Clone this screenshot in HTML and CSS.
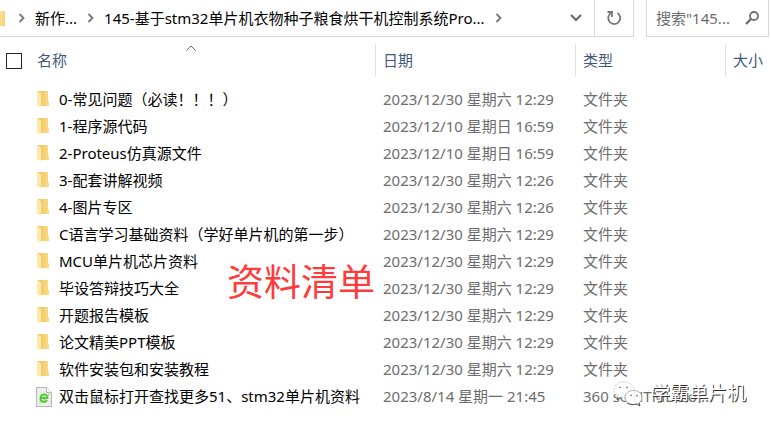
FILE: index.html
```html
<!DOCTYPE html>
<html lang="zh-CN">
<head>
<meta charset="utf-8">
<title>资料清单</title>
<link rel="stylesheet" href="styles.css">
</head>
<body>
<svg class="symbols" aria-hidden="true">
  <linearGradient id="back"><stop offset="0" stop-color="#efc55f"/><stop offset="1" stop-color="#fadb85"/></linearGradient>
  <symbol id="chevron" viewBox="0 0 8 10"><path d="M1.500 1l4 4-4 4" fill="none" stroke="#777" stroke-width="1.8"/></symbol>
  <symbol id="folder" viewBox="0 0 12 17">
    <path d="M1 0h10v10.500h1V15H3z" fill="url(#back)"/>
    <path d="M0 0l4 2.500V16.500L0 14.500z" fill="#ffe8a8"/>
  </symbol>
</svg>

<header class="toolbar">
  <div class="address">
    <span class="root"></span>
    <svg class="chevron"><use href="#chevron"/></svg>
    <a class="crumb" href="#">新作...</a>
    <svg class="chevron"><use href="#chevron"/></svg>
    <a class="crumb" href="#">145-基于stm32单片机衣物种子粮食烘干机控制系统Pro...</a>
    <svg class="chevron"><use href="#chevron"/></svg>
    <button class="tool drop" type="button" aria-label="展开">
      <svg width="12" height="8" viewBox="0 0 12 8"><path d="M1 1l5 5 5-5" fill="none" stroke="#666" stroke-width="2"/></svg>
    </button>
    <button class="tool refresh" type="button" aria-label="刷新">
      <svg width="16" height="16" viewBox="0 0 16 16"><path d="M11.500 3A6 6 0 1 1 5 3" fill="none" stroke="#757575" stroke-width="1.8"/><path d="M1.500 2h4.500v5" fill="none" stroke="#757575" stroke-width="1.800"/></svg>
    </button>
  </div>
  <form class="search">
    <input type="text" aria-label="搜索" placeholder='搜索"145...'>
    <button class="tool find" type="submit" aria-label="开始搜索">
      <svg width="14" height="14" viewBox="0 0 14 14"><circle cx="9" cy="5" r="4" fill="none" stroke="#707070" stroke-width="1.8"/><path d="M6 8l-5 5" stroke="#707070" stroke-width="2.4"/></svg>
    </button>
  </form>
</header>

<main class="list">
  <table class="files">
    <colgroup><col class="col-name"><col class="col-date"><col class="col-type"><col></colgroup>
    <thead>
      <tr>
        <th>
          <div class="name-head">
            <input class="check" type="checkbox" id="all"><label for="all">名称</label>
            <svg class="sort" width="10" height="6" viewBox="0 0 10 6"><path d="M.5 5.500l4.500-4.500 4.500 4.500" fill="none" stroke="#666"/></svg>
          </div>
        </th>
        <th>日期</th><th>类型</th><th>大小</th>
      </tr>
    </thead>
    <tbody>
      <tr><td><div class="file"><svg class="icon"><use href="#folder"/></svg>0-常见问题（必读！！！）</div></td><td>2023/12/30 星期六 12:29</td><td>文件夹</td><td></td></tr>
      <tr><td><div class="file"><svg class="icon"><use href="#folder"/></svg>1-程序源代码</div></td><td>2023/12/10 星期日 16:59</td><td>文件夹</td><td></td></tr>
      <tr><td><div class="file"><svg class="icon"><use href="#folder"/></svg>2-Proteus仿真源文件</div></td><td>2023/12/10 星期日 16:59</td><td>文件夹</td><td></td></tr>
      <tr><td><div class="file"><svg class="icon"><use href="#folder"/></svg>3-配套讲解视频</div></td><td>2023/12/30 星期六 12:26</td><td>文件夹</td><td></td></tr>
      <tr><td><div class="file"><svg class="icon"><use href="#folder"/></svg>4-图片专区</div></td><td>2023/12/30 星期六 12:26</td><td>文件夹</td><td></td></tr>
      <tr><td><div class="file"><svg class="icon"><use href="#folder"/></svg>C语言学习基础资料（学好单片机的第一步）</div></td><td>2023/12/30 星期六 12:29</td><td>文件夹</td><td></td></tr>
      <tr><td><div class="file"><svg class="icon"><use href="#folder"/></svg>MCU单片机芯片资料</div></td><td>2023/12/30 星期六 12:29</td><td>文件夹</td><td></td></tr>
      <tr><td><div class="file"><svg class="icon"><use href="#folder"/></svg>毕设答辩技巧大全</div></td><td>2023/12/30 星期六 12:29</td><td>文件夹</td><td></td></tr>
      <tr><td><div class="file"><svg class="icon"><use href="#folder"/></svg>开题报告模板</div></td><td>2023/12/30 星期六 12:29</td><td>文件夹</td><td></td></tr>
      <tr><td><div class="file"><svg class="icon"><use href="#folder"/></svg>论文精美PPT模板</div></td><td>2023/12/30 星期六 12:29</td><td>文件夹</td><td></td></tr>
      <tr><td><div class="file"><svg class="icon"><use href="#folder"/></svg>软件安装包和安装教程</div></td><td>2023/12/30 星期六 12:29</td><td>文件夹</td><td></td></tr>
      <tr>
        <td><div class="file">
          <svg class="page" viewBox="0 0 16 20">
            <path d="M.5.500h10l5 5v14H.5z" fill="#eee" stroke="#b5b5b5"/>
            <path d="M10.500.500v5h5" fill="#fff" stroke="#b5b5b5"/>
            <path d="M4.500 11h7c0-5-7-4.500-7 .5 0 4 5 4.500 6.500 1.500" fill="none" stroke="#4fc92d" stroke-width="1.900"/>
            <path d="M3.500 15c1 1 7-3 9.500-8" fill="none" stroke="#6ad84a"/>
          </svg>双击鼠标打开查找更多51、stm32单片机资料</div></td>
        <td>2023/8/14 星期一 21:45</td><td>360 se HTML Do...</td><td></td>
      </tr>
    </tbody>
  </table>

  <div class="stamp">资料清单</div>
  <div class="watermark">
    <svg width="30" height="26" viewBox="0 0 30 26">
      <path d="M11 1C5 1 1 4.500 1 9c0 2.500 1.500 4.500 3.500 6l-1 3.500 4-2c5 1.500 14-1 13.500-8C20.500 4 16 1 11 1z" fill="#fff" fill-opacity=".9" stroke="#bbb" stroke-width=".7" stroke-dasharray="2 1"/>
      <path d="M20.500 9.500c-5 0-8.500 3-8.500 7s3.500 7 8.500 7l3-.5 3.500 2-1-3c2-1.500 3-3.500 3-5.500 0-4-3.500-7-8.500-7z" fill="#fff" fill-opacity=".9" stroke="#999" stroke-width=".8"/>
      <path d="M5 16l-1 2.500 4-2M14 22c3 2 7 2 10 1l3 2-1-3" fill="none" stroke="#555"/>
      <g fill="#555"><circle cx="7" cy="6.500" r=".8"/><circle cx="14" cy="6.500" r=".8"/><circle cx="18" cy="14.500" r=".8"/><circle cx="24" cy="14.500" r=".8"/></g>
    </svg>
    <span>学霸单片机</span>
  </div>
</main>
</body>
</html>
```
FILE: styles.css
```css
* {
  box-sizing: border-box;
}

body {
  margin: 0;
  background: #fff;
  color: #000;
  font: 15px/27px "Noto Sans", "Noto Sans CJK SC", sans-serif;
}

.symbols {
  position: absolute;
  width: 0;
  height: 0;
}

/* toolbar */
.toolbar {
  display: flex;
  gap: 12px;
  height: 37px;
  padding-right: 2px;
}

.address {
  display: flex;
  flex: 1;
  align-items: center;
  min-width: 0;
  border: solid #d9d9d9;
  border-width: 0 1px 1px 0;
  white-space: nowrap;
}

.root {
  width: 5px;
  height: 15px;
  margin-right: 13px;
  background: linear-gradient(100deg, #ffe39a, #f7cf68);
}

.chevron {
  flex: none;
  width: 8px;
  height: 10px;
}

.crumb {
  margin: 0 10px 0 9px;
  color: #000;
  text-decoration: none;
}

.tool {
  display: flex;
  flex: none;
  align-items: center;
  justify-content: center;
  height: 100%;
  padding: 0;
  border: 0;
  background: none;
}

.drop {
  width: 36px;
  margin-left: auto;
}

.refresh {
  width: 39px;
  border-left: 1px solid #d9d9d9;
}

.search {
  display: flex;
  width: 123px;
  border: solid #d9d9d9;
  border-width: 0 1px 1px;
}

.search input {
  flex: 1;
  min-width: 0;
  padding: 0 0 0 9px;
  border: 0;
  outline: 0;
  background: none;
  font: inherit;
}

.search input::placeholder {
  color: #6d6d6d;
}

.find {
  width: 32px;
}

/* file list */
.list {
  position: relative;
  padding-top: 7px;
  overflow: hidden;
}

.files {
  width: 100%;
  table-layout: fixed;
  border-collapse: separate;
  border-spacing: 0;
  white-space: nowrap;
}

.col-name { width: 376px; }
.col-date { width: 200px; }
.col-type { width: 150px; }

th {
  height: 33px;
  padding: 0 0 0 7px;
  border-right: 1px solid #e2e2e2;
  color: #44597a;
  font-weight: 400;
  text-align: left;
}

th:last-child {
  border-right: 0;
}

.name-head {
  position: relative;
  display: flex;
  align-items: center;
  gap: 15px;
}

th:first-child {
  padding-left: 6px;
}

.check {
  width: 16px;
  height: 16px;
  margin: 0;
  appearance: none;
  border: 1px solid #222;
}

.check:checked {
  background: #0078d7;
}

.sort {
  position: absolute;
  top: -2px;
  left: 180px;
}

tbody::before {
  content: "";
  display: block;
  height: 9px;
}

td {
  height: 27px;
  padding: 0 0 0 7px;
  color: #6d6d6d;
}

td:first-child {
  padding-left: 35px;
  color: #000;
}

.file {
  display: flex;
  align-items: center;
}

.icon {
  width: 12px;
  height: 17px;
  margin: 0 10px 0 2px;
}

.page {
  width: 16px;
  height: 20px;
  margin: 0 7px 0 1px;
}

/* marks over the list */
.stamp {
  position: absolute;
  top: 218px;
  left: 227px;
  color: #ff3b3b;
  font-size: 37px;
  line-height: 54px;
}

.watermark {
  position: absolute;
  top: 343px;
  right: 25px;
  display: flex;
  align-items: center;
  gap: 8px;
  color: #fff;
  font-size: 19px;
  text-shadow: 1px 1px 0 #333;
}
```
